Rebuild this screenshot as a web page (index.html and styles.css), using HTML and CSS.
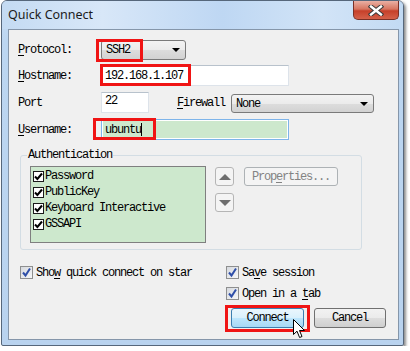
FILE: index.html
```html
<!DOCTYPE html>
<html lang="en">
<head>
    <meta charset="UTF-8">
    <title>Quick Connect</title>
    <link rel="stylesheet" href="styles.css">
</head>
<body>
    <div class="window">
        <div class="titlebar">
            <span class="title">Quick Connect</span>
            <div class="close-btn">
                <svg width="16" height="11" viewBox="0 0 16 11">
                    <path d="M3 1.5 L13 9.5 M13 1.5 L3 9.5" stroke="#3a3a3a" stroke-width="4.4" stroke-linecap="square"/>
                    <path d="M3 1.5 L13 9.5 M13 1.5 L3 9.5" stroke="#fff" stroke-width="2.4" stroke-linecap="square"/>
                </svg>
            </div>
        </div>

        <div class="client">
            <div class="row row-proto">
                <span class="lbl"><u>P</u>rotocol:</span>
                <div class="select select-proto">
                    <span>SSH2</span>
                    <span class="arrow"></span>
                    <span class="mark mark-proto"></span>
                </div>
            </div>
            <div class="row">
                <span class="lbl"><u>H</u>ostname:</span>
                <div class="input input-wide">
                    <span>192.168.1.107</span>
                    <span class="mark mark-host"></span>
                </div>
            </div>
            <div class="row">
                <span class="lbl">Port</span>
                <div class="input input-port">22</div>
                <span class="lbl-fw"><u>F</u>irewall</span>
                <div class="select select-fw">
                    <span>None</span>
                    <span class="arrow"></span>
                </div>
            </div>
            <div class="row">
                <span class="lbl"><u>U</u>sername:</span>
                <div class="input input-wide input-focus">
                    <span>ubuntu</span><span class="caret"></span>
                    <span class="mark mark-user"></span>
                </div>
            </div>

            <fieldset class="auth">
                <legend>Authentication</legend>
                <div class="auth-body">
                    <div class="auth-list">
                        <div class="item"><span class="cb-classic"><svg width="9" height="9" viewBox="0 0 9 9"><path d="M1 4.5 L3.4 7 L8 1.5" stroke="#000" stroke-width="2" fill="none"/></svg></span>Password</div>
                        <div class="item"><span class="cb-classic"><svg width="9" height="9" viewBox="0 0 9 9"><path d="M1 4.5 L3.4 7 L8 1.5" stroke="#000" stroke-width="2" fill="none"/></svg></span>PublicKey</div>
                        <div class="item"><span class="cb-classic"><svg width="9" height="9" viewBox="0 0 9 9"><path d="M1 4.5 L3.4 7 L8 1.5" stroke="#000" stroke-width="2" fill="none"/></svg></span>Keyboard Interactive</div>
                        <div class="item"><span class="cb-classic"><svg width="9" height="9" viewBox="0 0 9 9"><path d="M1 4.5 L3.4 7 L8 1.5" stroke="#000" stroke-width="2" fill="none"/></svg></span>GSSAPI</div>
                    </div>
                    <div class="move-btns">
                        <div class="small-btn"><span class="tri-up"></span></div>
                        <div class="small-btn"><span class="tri-down"></span></div>
                    </div>
                    <div class="btn-disabled">Prop<u>e</u>rties...</div>
                </div>
            </fieldset>

            <div class="bottom">
                <div class="bottom-left">
                    <div class="check-row">
                        <span class="cb"><svg width="11" height="11" viewBox="0 0 11 11"><path d="M2 5.5 L4.5 8.5 L9 1.5" stroke="#2f4fa8" stroke-width="2" fill="none"/></svg></span>
                        <span>Sho<u>w</u> quick connect on star</span>
                    </div>
                </div>
                <div class="bottom-right">
                    <div class="check-row">
                        <span class="cb"><svg width="11" height="11" viewBox="0 0 11 11"><path d="M2 5.5 L4.5 8.5 L9 1.5" stroke="#2f4fa8" stroke-width="2" fill="none"/></svg></span>
                        <span>Sa<u>v</u>e session</span>
                    </div>
                    <div class="check-row">
                        <span class="cb"><svg width="11" height="11" viewBox="0 0 11 11"><path d="M2 5.5 L4.5 8.5 L9 1.5" stroke="#2f4fa8" stroke-width="2" fill="none"/></svg></span>
                        <span>Open in a <u>t</u>ab</span>
                    </div>
                    <div class="buttons">
                        <div class="btn btn-connect">
                            Connect
                            <span class="mark mark-connect"></span>
                            <svg class="cursor" width="13" height="20" viewBox="0 0 13 20">
                                <path d="M0.5 0.5 L0.5 15.5 L4 12.2 L6.6 18.5 L9 17.5 L6.5 11.5 L11.5 11.5 Z" fill="#fff" stroke="#000" stroke-width="1"/>
                            </svg>
                        </div>
                        <div class="btn">Cancel</div>
                    </div>
                </div>
            </div>
        </div>
    </div>
</body>
</html>
```

FILE: styles.css
```css
* {
    box-sizing: border-box;
}

body {
    margin: 0;
    background-color: #fff;
    font-family: "Liberation Mono", "DejaVu Sans Mono", monospace;
    font-size: 12px;
    letter-spacing: -1.2px;
    color: #000;
}

u {
    text-decoration-thickness: 1px;
    text-underline-offset: 2px;
}

.window {
    margin-left: 1px;
    width: 403px;
    height: 346px;
    border: 1px solid #56677b;
    border-radius: 6px 6px 2px 2px;
    background: linear-gradient(#c9def5, #bcd6f1 40px, #b9d3ef);
    box-shadow: 2px 2px 3px rgba(0, 0, 0, 0.45);
}

.titlebar {
    height: 28px;
    display: flex;
    justify-content: space-between;
    align-items: flex-start;
    border-radius: 5px 5px 0 0;
    background: linear-gradient(to right, #c4dbf3, #d8e7f8 25%, #bed7f3 55%, #d2e4f7 80%, #c2daf3);
}

.title {
    font-family: "Noto Sans", sans-serif;
    font-size: 12.5px;
    letter-spacing: 0;
    margin: 5px 0 0 6px;
    color: #1b1b1b;
}

.close-btn {
    width: 46px;
    height: 19px;
    margin-right: 4px;
    display: flex;
    align-items: center;
    justify-content: center;
    border: 1px solid #7a3026;
    border-top: none;
    border-radius: 0 0 5px 5px;
    background: linear-gradient(#eab0a4, #d77560 45%, #c6402a 55%, #d4614a);
}

.client {
    margin-left: 6px;
    width: 391px;
    height: 311px;
    border: 1px solid #8596aa;
    background-color: #f0f0f0;
    padding: 10px 0 0 9px;
}

.row {
    display: flex;
    align-items: center;
    height: 21px;
    margin-bottom: 6px;
}

.row-proto {
    height: 20px;
    margin-bottom: 5px;
}

.lbl {
    width: 83px;
}

.lbl-fw {
    width: 54px;
    margin-left: 28px;
}

.select {
    position: relative;
    height: 20px;
    display: flex;
    align-items: center;
    justify-content: space-between;
    padding: 0 5px 0 4px;
    border: 1px solid #7a7a7a;
    border-radius: 3px;
    background: linear-gradient(#f3f3f3, #ebebeb 50%, #dddddd 50%, #d2d2d2);
}

.select-proto {
    width: 85px;
}

.select-fw {
    width: 143px;
    height: 19px;
    margin-top: 2px;
}

.arrow {
    width: 0;
    height: 0;
    border-left: 4px solid transparent;
    border-right: 4px solid transparent;
    border-top: 4px solid #000;
}

.input {
    position: relative;
    height: 21px;
    display: flex;
    align-items: center;
    padding: 0 3px;
    border: 1px solid #dde3ea;
    border-top-color: #b8c2cc;
    background-color: #fff;
}

.input-wide {
    width: 188px;
}

.input-port {
    width: 48px;
    align-items: flex-start;
    padding-top: 1px;
}

.input-focus {
    border-color: #7eb4ea;
    background-color: #cde8cd;
    box-shadow: inset 0 0 0 1px #fff;
}

.caret {
    width: 1px;
    height: 13px;
    background-color: #000;
}

.mark {
    position: absolute;
    border: 3px solid #f01414;
}

.mark-proto {
    left: -6px;
    top: -2px;
    width: 47px;
    height: 23px;
}

.mark-host {
    left: -2px;
    top: -2px;
    width: 91px;
    height: 22px;
}

.mark-user {
    left: -9px;
    top: -2px;
    width: 63px;
    height: 22px;
}

.auth {
    margin: 8px 0 0 2px;
    width: 342px;
    height: 102px;
    padding: 0;
    border: 1px solid #d3dde4;
    border-radius: 3px;
}

.auth legend {
    margin-left: 6px;
    padding: 0 1px;
    line-height: 14px;
}

.auth-body {
    display: flex;
    align-items: flex-start;
    padding: 4px 0 0 9px;
}

.auth-list {
    width: 176px;
    height: 77px;
    padding-top: 1px;
    border: 1px solid #7f7f7f;
    background-color: #cde8cd;
}

.item {
    height: 16px;
    display: flex;
    align-items: center;
    gap: 1px;
    padding-left: 2px;
}

.cb-classic {
    width: 11px;
    height: 11px;
    display: flex;
    align-items: center;
    justify-content: center;
    border: 1px solid #1a1a1a;
    background-color: #fff;
}

.move-btns {
    display: flex;
    flex-direction: column;
    gap: 7px;
    margin: 1px 0 0 9px;
}

.small-btn {
    width: 19px;
    height: 19px;
    display: flex;
    align-items: center;
    justify-content: center;
    border: 1px solid #b5b5b5;
    border-radius: 3px;
    background-color: #f4f4f4;
}

.tri-up {
    border-left: 6px solid transparent;
    border-right: 6px solid transparent;
    border-bottom: 6px solid #6e6e6e;
}

.tri-down {
    border-left: 6px solid transparent;
    border-right: 6px solid transparent;
    border-top: 6px solid #6e6e6e;
}

.btn-disabled {
    width: 94px;
    height: 19px;
    margin: 1px 0 0 10px;
    display: flex;
    align-items: center;
    justify-content: center;
    border: 1px solid #adb2b5;
    border-radius: 3px;
    background-color: #f4f4f4;
    color: #838383;
}

.bottom {
    display: flex;
    margin-top: 16px;
}

.bottom-left {
    width: 208px;
    padding-left: 2px;
}

.bottom-right {
    display: flex;
    flex-direction: column;
    gap: 8px;
}

.check-row {
    display: flex;
    align-items: center;
    gap: 3px;
    height: 13px;
}

.cb {
    width: 13px;
    height: 13px;
    display: flex;
    align-items: center;
    justify-content: center;
    border: 1px solid #8e8f8f;
    background: linear-gradient(135deg, #d6d9de, #f6f7f8);
}

.buttons {
    display: flex;
    gap: 10px;
    margin-left: 5px;
}

.btn {
    position: relative;
    width: 72px;
    height: 20px;
    display: flex;
    align-items: center;
    justify-content: center;
    border: 1px solid #707070;
    border-radius: 3px;
    background: linear-gradient(#f2f2f2, #ebebeb 50%, #dddddd 50%, #cfcfcf);
}

.btn-connect {
    width: 73px;
    border-color: #3c7fb1;
    background: linear-gradient(#eaf6fd, #d9f0fc 50%, #bee6fd 50%, #a7d9f5);
}

.mark-connect {
    left: -7px;
    top: -4px;
    width: 85px;
    height: 27px;
}

.cursor {
    position: absolute;
    left: 61px;
    top: 10px;
}
```
